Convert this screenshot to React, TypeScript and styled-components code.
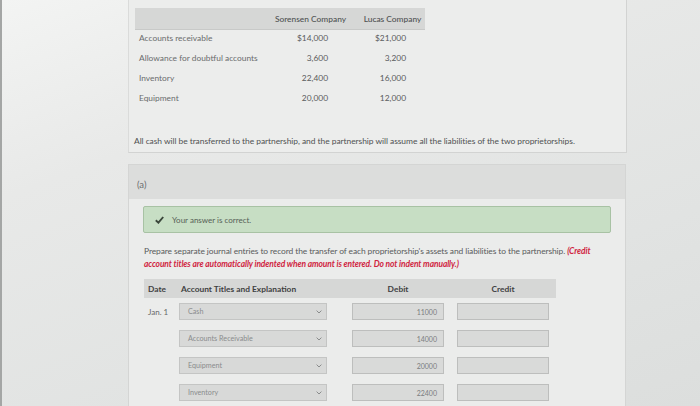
import React from 'react';
import styled, { createGlobalStyle } from 'styled-components';

const GlobalStyle = createGlobalStyle`
  html, body {
    margin: 0;
    padding: 0;
  }
  body {
    width: 700px;
    height: 406px;
    overflow: hidden;
    font-family: Lato, 'Open Sans', sans-serif;
    background: linear-gradient(160deg, #f3f4f3 0%, #e8e9e8 30%, #e1e3e2 70%, #dcdedd 100%);
  }
`;

const companies = [
  { label: 'Accounts receivable', sorensen: '$14,000', lucas: '$21,000' },
  { label: 'Allowance for doubtful accounts', sorensen: '3,600', lucas: '3,200' },
  { label: 'Inventory', sorensen: '22,400', lucas: '16,000' },
  { label: 'Equipment', sorensen: '20,000', lucas: '12,000' },
];

const entries = [
  { date: 'Jan. 1', account: 'Cash', debit: '11000' },
  { date: '', account: 'Accounts Receivable', debit: '14000' },
  { date: '', account: 'Equipment', debit: '20000' },
  { date: '', account: 'Inventory', debit: '22400' },
];

const App: React.FC = () => {
  return (
    <>
      <GlobalStyle />
      <Page>
        <Column>
          <InfoCard>
            <DataTable>
              <HeaderCell />
              <HeaderCell>Sorensen Company</HeaderCell>
              <HeaderCell $shift={10}>Lucas Company</HeaderCell>
              {companies.map((row) => (
                <React.Fragment key={row.label}>
                  <LabelCell>{row.label}</LabelCell>
                  <ValueCell $pad={22}>{row.sorensen}</ValueCell>
                  <ValueCell $pad={19}>{row.lucas}</ValueCell>
                </React.Fragment>
              ))}
            </DataTable>
            <Note>
              All cash will be transferred to the partnership, and the partnership will assume all the liabilities of
              the two proprietorships.
            </Note>
          </InfoCard>

          <PartCard>
            <PartHeader>(a)</PartHeader>
            <PartBody>
              <Correct>
                <svg width="9" height="8" viewBox="0 0 9 8">
                  <path d="M0.8 4.3 L3.4 6.7 L8.2 1" fill="none" stroke="#3b473b" strokeWidth="1.9" />
                </svg>
                <span>Your answer is correct.</span>
              </Correct>

              <Instructions>
                <span>
                  Prepare separate journal entries to record the transfer of each proprietorship's assets and
                  liabilities to the partnership. <Warn>(Credit</Warn>
                </span>
                <Warn>account titles are automatically indented when amount is entered. Do not indent manually.)</Warn>
              </Instructions>

              <JournalHead>
                <JHead>Date</JHead>
                <JHead $offset={-2}>Account Titles and Explanation</JHead>
                <JHead $center>Debit</JHead>
                <JHead $center>Credit</JHead>
              </JournalHead>
              <JournalRows>
                {entries.map((e) => (
                  <JournalRow key={e.account}>
                    <DateCell>{e.date}</DateCell>
                    <Select>
                      <span>{e.account}</span>
                      <svg width="6" height="4" viewBox="0 0 6 4">
                        <path d="M0.6 0.6 L3 3 L5.4 0.6" fill="none" stroke="#8a8c8c" strokeWidth="1" />
                      </svg>
                    </Select>
                    <Amount>{e.debit}</Amount>
                    <Amount />
                  </JournalRow>
                ))}
              </JournalRows>
            </PartBody>
          </PartCard>
        </Column>
      </Page>
    </>
  );
};

const Page = styled.div`
  display: flex;
  padding-left: 126px;
  height: 406px;
  box-sizing: border-box;
  border-left: 2px solid #a4a6a5;
`;

const Column = styled.div`
  display: flex;
  flex-direction: column;
  gap: 11px;
  width: 499px;
  margin-top: -1px;
`;

const InfoCard = styled.div`
  background: #ecedec;
  border: 1px solid #d2d3d2;
  border-left-color: #dadbda;
  padding: 8px 6px 0 6px;
  height: 154px;
  box-sizing: border-box;
`;

const DataTable = styled.div`
  display: grid;
  grid-template-columns: 136px 79px 75px;
  grid-auto-rows: 20px;
  grid-template-rows: 22px;
  width: 290px;
  font-size: 8.4px;
  color: #5f6162;
`;

const HeaderCell = styled.div<{ $shift?: number }>`
  background: #d6d7d6;
  display: flex;
  align-items: center;
  justify-content: center;
  padding-left: ${(p) => p.$shift ?? 0}px;
  color: #4f5152;
  font-weight: 500;
  border-bottom: 1px solid #c8c9c8;
`;

const LabelCell = styled.div`
  padding-left: 4px;
  line-height: 16px;
  white-space: nowrap;
  color: #6a6c6d;
`;

const ValueCell = styled.div<{ $pad: number }>`
  text-align: right;
  padding-right: ${(p) => p.$pad}px;
  line-height: 16px;
  color: #595b5c;
`;

const Note = styled.p`
  margin: 26px 0 0 -1px;
  font-size: 8.45px;
  color: #4f5152;
  white-space: nowrap;
  letter-spacing: -0.05px;
`;

const PartCard = styled.div`
  display: flex;
  flex-direction: column;
  flex: 1;
  width: 496px;
  border: 1px solid #d4d5d4;
  border-bottom: none;
`;

const PartHeader = styled.div`
  background: #dcdddc;
  height: 34px;
  display: flex;
  align-items: center;
  padding: 4px 0 0 8px;
  box-sizing: border-box;
  font-size: 9.5px;
  color: #6c6e6f;
`;

const PartBody = styled.div`
  flex: 1;
  background: #ebeceb;
  padding: 7px 14px 0 14px;
`;

const Correct = styled.div`
  display: flex;
  align-items: center;
  gap: 8px;
  height: 27px;
  box-sizing: border-box;
  padding-left: 11px;
  background: #c7dec4;
  border: 1px solid #a8c2a4;
  border-radius: 2px;
  font-size: 8px;
  color: #556056;
`;

const Instructions = styled.div`
  display: flex;
  flex-direction: column;
  margin: 12px 0 0 1px;
  font-size: 8.45px;
  line-height: 13px;
  color: #595b5c;
  letter-spacing: -0.1px;
  white-space: nowrap;
`;

const Warn = styled.span`
  color: #d0243f;
  font-weight: 700;
  font-style: italic;
`;

const journalColumns = `
  display: grid;
  grid-template-columns: 35px 173px 105px 99px;
  width: 412px;
  margin-left: 1px;
`;

const JournalHead = styled.div`
  ${journalColumns}
  height: 19px;
  margin-top: 8px;
  background: #d6d7d6;
`;

const JHead = styled.div<{ $center?: boolean; $offset?: number }>`
  display: flex;
  align-items: center;
  justify-content: ${(p) => (p.$center ? 'center' : 'flex-start')};
  width: ${(p) => (p.$center ? '92px' : 'auto')};
  padding-left: ${(p) => (p.$center ? 0 : 4 + (p.$offset ?? 0))}px;
  font-size: 8.4px;
  font-weight: 700;
  color: #3f4142;
  white-space: nowrap;
`;

const JournalRows = styled.div`
  display: flex;
  flex-direction: column;
  gap: 10px;
  margin-top: 5px;
`;

const JournalRow = styled.div`
  ${journalColumns}
  height: 17px;
`;

const DateCell = styled.div`
  display: flex;
  align-items: center;
  padding-left: 4px;
  font-size: 8px;
  color: #666869;
  white-space: nowrap;
`;

const Select = styled.div`
  display: flex;
  align-items: center;
  justify-content: space-between;
  width: 148px;
  padding: 0 4px 0 8px;
  background: #d8d9d8;
  border: 1px solid #c4c5c4;
  font-size: 7.2px;
  color: #8a8c8d;
  box-sizing: border-box;
`;

const Amount = styled.div`
  display: flex;
  align-items: center;
  justify-content: flex-end;
  width: 92px;
  padding-right: 6px;
  background: #d9dad9;
  border: 1px solid #bdbebd;
  font-size: 7px;
  color: #7b7d7e;
  box-sizing: border-box;
`;

export default App;
